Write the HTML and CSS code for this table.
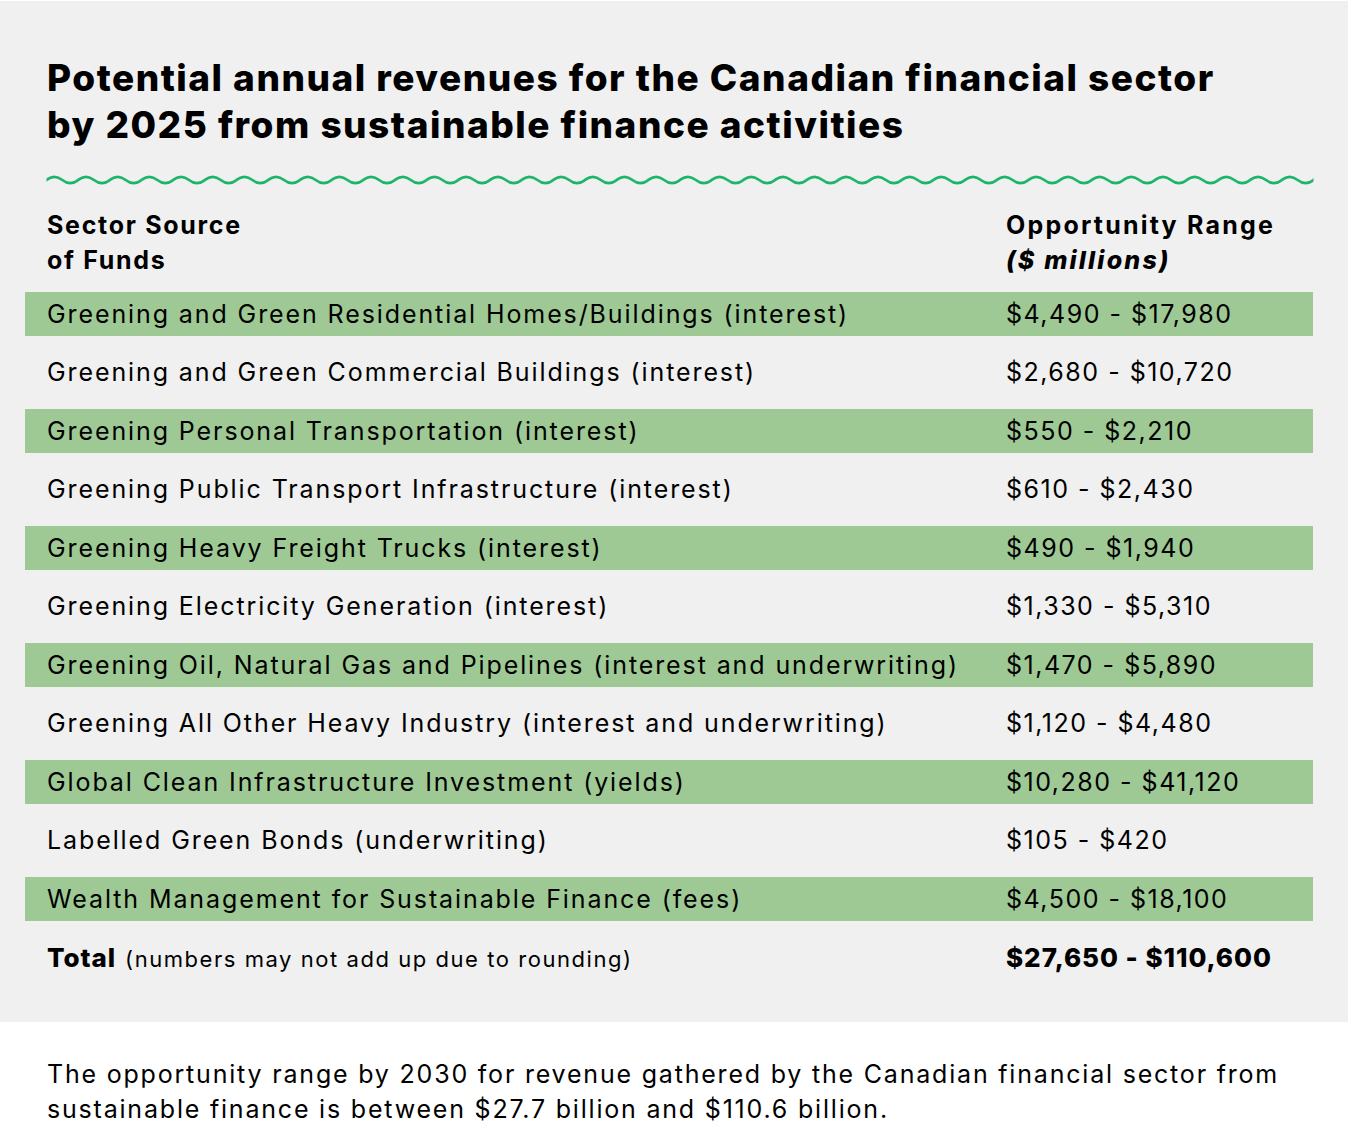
FILE: index.html
```html
<!DOCTYPE html>
<html lang="en">
<head>
<meta charset="utf-8">
<title>Potential annual revenues</title>
<link rel="stylesheet" href="styles.css">
</head>
<body>
<section class="panel">
  <h1 class="title">Potential annual revenues for the Canadian financial sector<br>by 2025 from sustainable finance activities</h1>
  <svg class="wave" width="1270" height="12" viewBox="0 0 1270 12" aria-hidden="true">
    <defs>
      <pattern id="wavePattern" x="1.5" y="0" width="31.675" height="12" patternUnits="userSpaceOnUse">
        <path d="M-31.675,6 q7.919,-6.4 15.8375,0 t15.8375,0 t15.8375,0 t15.8375,0 t15.8375,0 t15.8375,0" fill="none" stroke="#1bb567" stroke-width="2.6"/>
      </pattern>
    </defs>
    <rect x="1.5" y="0" width="1267" height="12" fill="url(#wavePattern)"/>
  </svg>
  <div class="table">
    <div class="row head">
      <div class="c1">Sector Source<br>of Funds</div>
      <div class="c2">Opportunity Range<br><em>($ millions)</em></div>
    </div>
    <div class="row band"><div class="c1">Greening and Green Residential Homes/Buildings (interest)</div><div class="c2">$4,490 - $17,980</div></div>
    <div class="row"><div class="c1">Greening and Green Commercial Buildings (interest)</div><div class="c2">$2,680 - $10,720</div></div>
    <div class="row band"><div class="c1">Greening Personal Transportation (interest)</div><div class="c2">$550 - $2,210</div></div>
    <div class="row"><div class="c1">Greening Public Transport Infrastructure (interest)</div><div class="c2">$610 - $2,430</div></div>
    <div class="row band"><div class="c1">Greening Heavy Freight Trucks (interest)</div><div class="c2">$490 - $1,940</div></div>
    <div class="row"><div class="c1">Greening Electricity Generation (interest)</div><div class="c2">$1,330 - $5,310</div></div>
    <div class="row band"><div class="c1">Greening Oil, Natural Gas and Pipelines (interest and underwriting)</div><div class="c2">$1,470 - $5,890</div></div>
    <div class="row"><div class="c1">Greening All Other Heavy Industry (interest and underwriting)</div><div class="c2">$1,120 - $4,480</div></div>
    <div class="row band"><div class="c1">Global Clean Infrastructure Investment (yields)</div><div class="c2">$10,280 - $41,120</div></div>
    <div class="row"><div class="c1">Labelled Green Bonds (underwriting)</div><div class="c2">$105 - $420</div></div>
    <div class="row band"><div class="c1">Wealth Management for Sustainable Finance (fees)</div><div class="c2">$4,500 - $18,100</div></div>
    <div class="row total"><div class="c1"><strong>Total</strong> <span class="note">(numbers may not add up due to rounding)</span></div><div class="c2"><strong>$27,650 - $110,600</strong></div></div>
  </div>
</section>
<p class="footnote">The opportunity range by 2030 for revenue gathered by the Canadian financial sector from<br>sustainable finance is between $27.7 billion and $110.6 billion.</p>
</body>
</html>
```
FILE: styles.css
```css
html, body {
  margin: 0;
  padding: 0;
  background: #ffffff;
}
body {
  font-family: "Inter", "Open Sans", sans-serif;
  color: #000;
  padding-top: 1px;
}
.panel {
  background: #f0f0f0;
  height: 1021px;
  box-sizing: border-box;
  padding: 53px 35px 0 25px;
}
.title {
  margin: 0 0 0 22px;
  font-size: 37px;
  line-height: 47px;
  font-weight: 800;
  letter-spacing: 1.5px;
}
.wave {
  display: block;
  margin: 26px 0 0 20px;
}
.table {
  margin-top: 22px;
  display: flex;
  flex-direction: column;
  gap: 14.5px;
}
.row {
  display: flex;
  height: 44px;
  align-items: center;
  font-size: 25px;
}
.row .c1 {
  width: 959px;
  padding-left: 22px;
  flex: none;
  letter-spacing: 1.9px;
}
.row .c2 {
  flex: 1;
  letter-spacing: 1.5px;
}
.band {
  background: #9ec994;
}
.head {
  height: 70px;
  font-weight: 700;
  line-height: 35px;
  font-size: 25px;
  margin-bottom: -1px;
}
.head .c1 {
  letter-spacing: 1.7px;
}
.head .c2 {
  letter-spacing: 2.2px;
}
.head em {
  font-style: italic;
  font-weight: 800;
}
.total strong {
  font-weight: 800;
  font-size: 26px;
  letter-spacing: 0.95px;
}
.total .note {
  font-size: 22px;
  letter-spacing: 1.55px;
}
.footnote {
  margin: 35px 0 0 47px;
  font-size: 25px;
  line-height: 35px;
  letter-spacing: 1.8px;
}
```
